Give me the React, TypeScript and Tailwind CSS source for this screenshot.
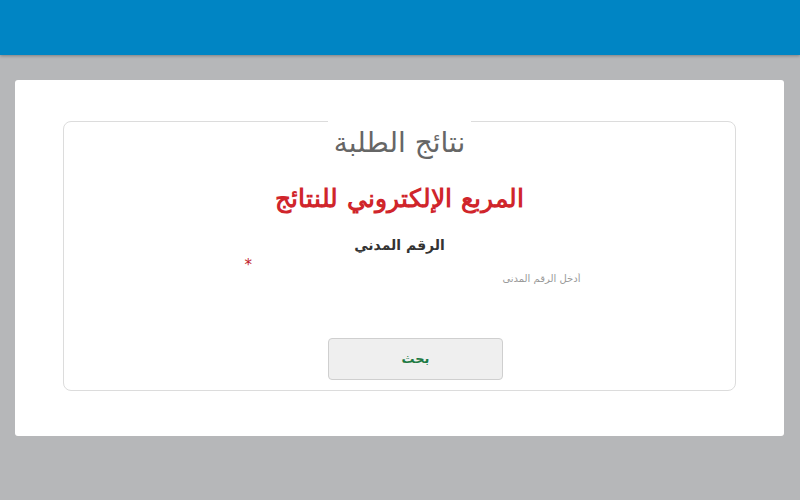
export default function App() {
  return (
    <div
      dir="rtl"
      className="min-h-[500px] w-[800px] bg-[#b6b7b9]"
      style={{ fontFamily: '"DejaVu Sans", "Liberation Sans", Arial, sans-serif' }}
    >
      <header className="h-[55px] bg-[#0085c4] shadow-[0_1px_3px_rgba(0,0,0,0.3)]" />

      <main className="pt-[25px]">
        <div className="mx-[16px] ml-[15px] rounded-[3px] bg-white px-[48px] pt-[3px] pb-[45px]">
          <fieldset className="rounded-[8px] border border-[#dcdcdc] px-4 pb-[10px]">
            <legend className="mx-auto px-[6px] pt-[44px] text-[28px] leading-[32px] text-[#666]">
              نتائج الطلبة
            </legend>

            <h1
              className="mt-[22px] text-center text-[25px] font-bold leading-[36px] text-[#d0252b]"
              style={{ fontFamily: '"DejaVu Serif", "Liberation Serif", serif' }}
            >
              المربع الإلكتروني للنتائج
            </h1>

            <div className="mt-[18px] text-center text-[14px] font-bold leading-[20px] text-[#333]">
              الرقم المدني
            </div>

            <div className="flex justify-center pl-[28px]">
              <div className="w-[338px]">
                <div className="mt-[3px] text-left text-[15px] leading-[14px] text-[#c0202a]">*</div>
                <input
                  type="text"
                  placeholder="أدخل الرقم المدني"
                  className="block h-[12px] w-full bg-transparent px-[2px] text-[10px] text-[#333] outline-none placeholder:text-[#9a9a9a]"
                />
              </div>
            </div>

            <div className="mt-[54px] flex justify-center pl-[32px]">
              <button
                type="button"
                className="h-[42px] w-[175px] rounded-[4px] border border-[#cfcfcf] bg-[#efefef] text-[13px] font-bold text-[#1e7a44]"
              >
                بحث
              </button>
            </div>
          </fieldset>
        </div>
      </main>
    </div>
  );
}
